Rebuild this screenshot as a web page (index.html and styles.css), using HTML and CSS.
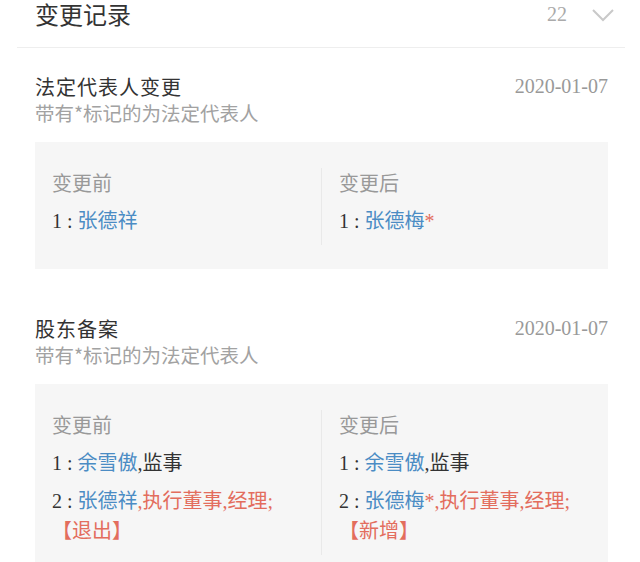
FILE: index.html
```html
<!DOCTYPE html>
<html lang="zh-CN">

<head>
    <meta charset="UTF-8" />
    <meta name="viewport" content="width=device-width, initial-scale=1.0" />
    <title>变更记录</title>
    <link rel="stylesheet" href="styles.css">
</head>

<body>

    <div class="panel_head">
        <div class="panel_title">变更记录</div>
        <div class="panel_count">
            <span class="count">22</span>
            <svg class="chevron" width="22" height="14" viewBox="0 0 22 14">
                <polyline points="1,2 11,12 21,2" fill="none" stroke="#c9c9c9" stroke-width="2" />
            </svg>
        </div>
    </div>

    <div class="record">
        <div class="record_top">
            <div class="record_name">法定代表人变更</div>
            <div class="record_date">2020-01-07</div>
        </div>
        <div class="record_note">带有*标记的为法定代表人</div>
        <div class="change_box">
            <div class="change_col">
                <div class="col_label">变更前</div>
                <div class="line">1 : <span class="person">张德祥</span></div>
            </div>
            <div class="change_col right">
                <div class="col_label">变更后</div>
                <div class="line">1 : <span class="person">张德梅</span><span class="mark">*</span></div>
            </div>
        </div>
    </div>

    <div class="record second">
        <div class="record_top">
            <div class="record_name">股东备案</div>
            <div class="record_date">2020-01-07</div>
        </div>
        <div class="record_note">带有*标记的为法定代表人</div>
        <div class="change_box">
            <div class="change_col">
                <div class="col_label">变更前</div>
                <div class="line">1 : <span class="person">余雪傲</span>,监事</div>
                <div class="line">2 : <span class="person">张德祥</span><span class="mark">,执行董事,经理;【退出】</span></div>
            </div>
            <div class="change_col right">
                <div class="col_label">变更后</div>
                <div class="line">1 : <span class="person">余雪傲</span>,监事</div>
                <div class="line">2 : <span class="person">张德梅</span><span class="mark">*,执行董事,经理;【新增】</span></div>
            </div>
        </div>
    </div>

</body>

</html>
```

FILE: styles.css
```css
:root {
    --text: #333;
    --muted: #999;
    --blue: #4b8cc4;
    --red: #e36d5d;
    --box: #f6f6f6;
}

* {
    box-sizing: border-box;
}

body {
    margin: 0;
    padding: 0;
    width: 100vw;
    height: 100vh;
    overflow: hidden;
    background-color: #fff;
    color: var(--text);
    font-family: "Liberation Serif", "Noto Sans CJK SC", serif;
}

.panel_head {
    margin: 0 15px 0 17px;
    padding: 0 11px 0 18px;
    height: 48px;
    display: flex;
    justify-content: space-between;
    align-items: flex-start;
    border-bottom: 1px solid #eeeeee;
}

.panel_title {
    font-family: "Noto Sans CJK SC", sans-serif;
    font-size: 24px;
    line-height: 28px;
    color: var(--text);
}

.panel_count {
    display: flex;
    align-items: center;
    gap: 25px;
    height: 28px;
}

.count {
    font-size: 20px;
    color: #aaa;
}

.chevron {
    display: block;
    margin-top: 1px;
}

/* records */

.record {
    margin: 0 32px 0 35px;
    padding-top: 25px;
}

.record.second {
    padding-top: 46px;
}

.record_top {
    display: flex;
    justify-content: space-between;
    align-items: center;
    height: 26px;
}

.record_name {
    font-family: "Noto Sans CJK SC", sans-serif;
    font-size: 20px;
    letter-spacing: 1px;
    color: var(--text);
}

.record_date {
    font-size: 20px;
    color: var(--muted);
}

.record_note {
    margin-top: 1px;
    font-family: "Noto Sans CJK SC", sans-serif;
    font-size: 19.5px;
    line-height: 26px;
    color: #a2a2a2;
}

.change_box {
    margin-top: 16px;
    padding: 26px 0 24px;
    background-color: var(--box);
    display: flex;
}

.change_col {
    flex: 1;
    padding: 0 12px 9px 17px;
}

.change_col.right {
    border-left: 1px solid #e9e9e9;
}

.col_label {
    font-family: "Noto Sans CJK SC", sans-serif;
    font-size: 20px;
    line-height: 30px;
    color: var(--muted);
}

.line {
    margin-top: 8px;
    font-size: 20px;
    line-height: 30px;
    color: var(--text);
}

.person {
    color: var(--blue);
}

.mark {
    color: var(--red);
}
```
